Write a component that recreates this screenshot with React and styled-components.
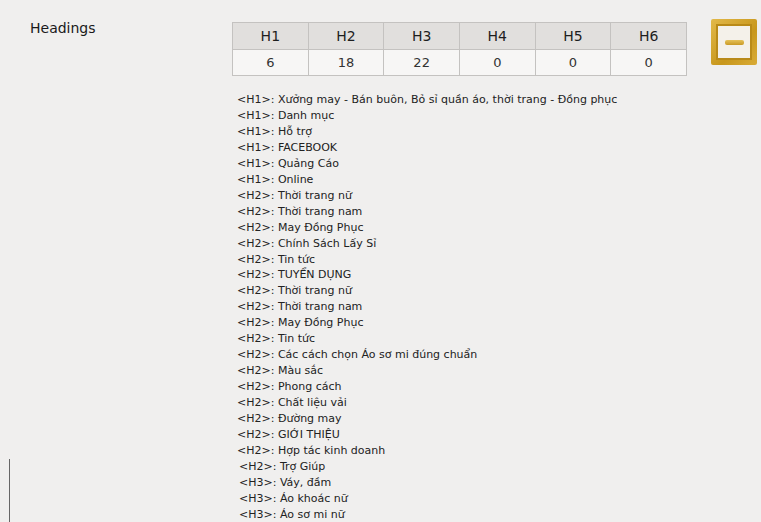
import styled, {createGlobalStyle} from 'styled-components'

const GlobalStyle = createGlobalStyle`
  html, body {
    margin: 0;
    padding: 0;
    background: #f0efee;
    overflow: hidden;
  }
`

const Page = styled.div`
  position: relative;
  width: 761px;
  height: 522px;
  display: flex;
  font-family: "DejaVu Sans", Tahoma, sans-serif;
  color: #222;
  overflow: hidden;
`

const Label = styled.div`
  width: 232px;
  box-sizing: border-box;
  padding: 20px 0 0 30px;
  font-size: 14px;
  color: #1a1a1a;
`

const Content = styled.div`
  display: flex;
  flex-direction: column;
  padding-top: 22px;
`

const TopRow = styled.div`
  display: flex;
  align-items: flex-start;
  gap: 24px;
`

const Table = styled.table`
  border-collapse: collapse;
  width: 455px;
  table-layout: fixed;
`

const Th = styled.th`
  height: 26px;
  padding: 0;
  background: #e1dfdd;
  border: 1px solid #c4c2c0;
  font-weight: normal;
  font-size: 14px;
  color: #1e1e1e;
`

const Td = styled.td`
  height: 25px;
  padding: 0;
  background: #f7f6f5;
  border: 1px solid #c4c2c0;
  text-align: center;
  font-size: 13px;
  color: #333;
`

const ToggleButton = styled.div`
  margin-top: -3px;
  width: 46px;
  height: 46px;
  box-sizing: border-box;
  padding: 5px;
  background: linear-gradient(135deg, #e2b94a, #c8971c 60%, #d9ab36);
  border-radius: 2px;
`

const ToggleInner = styled.div`
  width: 100%;
  height: 100%;
  box-sizing: border-box;
  border: 2px solid #b98a18;
  background: #f4f1ea;
  display: flex;
  align-items: center;
  justify-content: center;
`

const Dash = styled.div`
  width: 19px;
  height: 5px;
  border-radius: 2px;
  background: linear-gradient(#e6c25a, #c99a25);
`

const List = styled.div`
  margin-top: 16px;
  padding-left: 5px;
  font-size: 11px;
  line-height: 15.95px;
  color: #222;
`

const Line = styled.div`
  white-space: nowrap;
  padding-left: ${p => (p.$shift ? '2px' : '0')};
`

const SideRule = styled.div`
  position: absolute;
  left: 9px;
  top: 459px;
  bottom: 0;
  width: 1px;
  background: #666;
`

const counts = {H1: 6, H2: 18, H3: 22, H4: 0, H5: 0, H6: 0}

const lines = [
  ['H1', 'Xưởng may - Bán buôn, Bỏ sỉ quần áo, thời trang - Đồng phục'],
  ['H1', 'Danh mục'],
  ['H1', 'Hỗ trợ'],
  ['H1', 'FACEBOOK'],
  ['H1', 'Quảng Cáo'],
  ['H1', 'Online'],
  ['H2', 'Thời trang nữ'],
  ['H2', 'Thời trang nam'],
  ['H2', 'May Đồng Phục'],
  ['H2', 'Chính Sách Lấy Sỉ'],
  ['H2', 'Tin tức'],
  ['H2', 'TUYỂN DỤNG'],
  ['H2', 'Thời trang nữ'],
  ['H2', 'Thời trang nam'],
  ['H2', 'May Đồng Phục'],
  ['H2', 'Tin tức'],
  ['H2', 'Các cách chọn Áo sơ mi đúng chuẩn'],
  ['H2', 'Màu sắc'],
  ['H2', 'Phong cách'],
  ['H2', 'Chất liệu vải'],
  ['H2', 'Đường may'],
  ['H2', 'GIỚI THIỆU'],
  ['H2', 'Hợp tác kinh doanh'],
  ['H2', 'Trợ Giúp', true],
  ['H3', 'Váy, đầm', true],
  ['H3', 'Áo khoác nữ', true],
  ['H3', 'Áo sơ mi nữ', true],
]

export default function App() {
  return (
    <Page>
      <GlobalStyle />
      <Label>Headings</Label>
      <Content>
        <TopRow>
          <Table>
            <thead>
              <tr>
                {Object.keys(counts).map(h => <Th key={h}>{h}</Th>)}
              </tr>
            </thead>
            <tbody>
              <tr>
                {Object.values(counts).map((n, i) => <Td key={i}>{n}</Td>)}
              </tr>
            </tbody>
          </Table>
          <ToggleButton>
            <ToggleInner>
              <Dash />
            </ToggleInner>
          </ToggleButton>
        </TopRow>
        <List>
          {lines.map(([tag, text, shift], i) => (
            <Line key={i} $shift={shift}>{'<' + tag + '>: ' + text}</Line>
          ))}
        </List>
      </Content>
      <SideRule />
    </Page>
  )
}
